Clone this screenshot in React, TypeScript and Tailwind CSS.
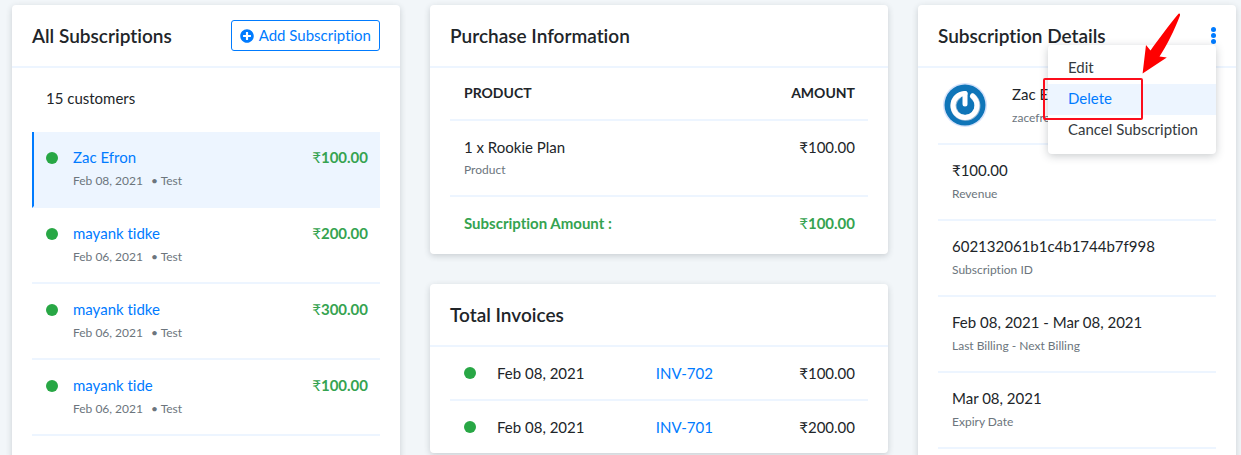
import type { ReactNode } from "react";

const FONT = "font-['Lato','Noto_Sans',sans-serif] [font-variant-ligatures:none]";

function Card({
  title,
  action,
  children,
  className = "",
}: {
  title: string;
  action?: ReactNode;
  children: ReactNode;
  className?: string;
}) {
  return (
    <section className={`rounded bg-white shadow-[0_2px_6px_rgba(40,50,60,0.2)] ${className}`}>
      <header className="flex h-[63px] items-center justify-between border-b-2 border-[#edf5ff] px-5">
        <h2 className="text-[19px] leading-7 font-semibold whitespace-nowrap text-[#212529]">{title}</h2>
        {action}
      </header>
      {children}
    </section>
  );
}

function Dot() {
  return <span className="block size-3 shrink-0 rounded-full bg-[#28a745]" />;
}

function PlusCircle() {
  return (
    <svg viewBox="0 0 512 512" className="size-3.5" fill="currentColor" aria-hidden="true">
      <path d="M256 8C119 8 8 119 8 256s111 248 248 248 248-111 248-248S393 8 256 8zm144 276c0 6.600-5.400 12-12 12h-92v92c0 6.600-5.400 12-12 12h-56c-6.600 0-12-5.400-12-12v-92h-92c-6.600 0-12-5.400-12-12v-56c0-6.600 5.400-12 12-12h92v-92c0-6.600 5.400-12 12-12h56c6.600 0 12 5.400 12 12v92h92c6.600 0 12 5.400 12 12v56z" />
    </svg>
  );
}

function Avatar() {
  return (
    <svg viewBox="0 0 44 44" className="size-11 shrink-0" aria-hidden="true">
      <circle cx="22" cy="22" r="22" fill="#d5e2fb" />
      <circle cx="22" cy="22" r="20.500" fill="#0f75b8" />
      <path
        d="M15.500 13A12 12 0 1 0 30 13.500"
        fill="none"
        stroke="#9dbdd6"
        strokeWidth="6"
        strokeLinecap="round"
      />
      <path
        d="M22 10.500C16 10.500 10 15.500 10 22.500A12 12 0 0 0 34 22.500C34 18.500 32.500 15.500 29.500 13"
        fill="none"
        stroke="#fff"
        strokeWidth="5"
        strokeLinecap="round"
        strokeLinejoin="round"
      />
      <path d="M22 10.500V21" fill="none" stroke="#fff" strokeWidth="5" strokeLinecap="round" />
    </svg>
  );
}

const subscriptions = [
  { name: "Zac Efron", date: "Feb 08, 2021", amount: "100.00", active: true },
  { name: "mayank tidke", date: "Feb 06, 2021", amount: "200.00", active: false },
  { name: "mayank tidke", date: "Feb 06, 2021", amount: "300.00", active: false },
  { name: "mayank tide", date: "Feb 06, 2021", amount: "100.00", active: false },
];

const invoices = [
  { date: "Feb 08, 2021", number: "INV-702", amount: "₹100.00" },
  { date: "Feb 08, 2021", number: "INV-701", amount: "₹200.00" },
];

const details = [
  { value: "₹100.00", label: "Revenue" },
  { value: "602132061b1c4b1744b7f998", label: "Subscription ID" },
  { value: "Feb 08, 2021 - Mar 08, 2021", label: "Last Billing - Next Billing" },
  { value: "Mar 08, 2021", label: "Expiry Date" },
];

function Subscriptions() {
  return (
    <Card
      title="All Subscriptions"
      className="min-h-screen"
      action={
        <button className="flex h-[31px] items-center gap-[5px] rounded-[3px] border border-[#007bff] px-2 text-[15px] text-[#007bff]">
          <PlusCircle />
          Add Subscription
        </button>
      }
    >
      <p className="px-[34px] pt-[19px] pb-[23px] text-[15px] leading-[22px]">15 customers</p>
      <ul className="px-5">
        {subscriptions.map((s, i) => (
          <li
            key={i}
            className={`flex gap-[15px] border-b-2 border-[#edf5ff] py-3.5 pr-3 ${
              s.active ? "border-l-2 border-l-[#007bff] bg-[#edf5ff] pl-3" : "pl-3.5"
            }`}
          >
            <span className="flex h-6 items-center">
              <Dot />
            </span>
            <div className="grow">
              <a href="#customer" className="block pb-0.5 text-[15px] leading-[22px] text-[#007bff]">
                {s.name}
              </a>
              <p className="flex text-xs leading-[22px] text-[#6c757d]">
                <span className="mr-2">{s.date}</span>
                <span>• Test</span>
              </p>
            </div>
            <span className="text-[15px] leading-[22px] font-bold text-[#35a350]">
              <span className="font-normal">₹</span>
              {s.amount}
            </span>
          </li>
        ))}
      </ul>
    </Card>
  );
}

function Purchase() {
  return (
    <Card title="Purchase Information">
      <div className="px-5 pb-[5px]">
        <table className="w-full text-[15px] leading-6">
          <thead>
            <tr className="border-b-2 border-[#edf5ff] text-sm leading-6">
              <th className="px-3.5 pt-[13px] pb-3.5 text-left font-bold">PRODUCT</th>
              <th className="px-[13px] pt-[13px] pb-3.5 text-right font-bold">AMOUNT</th>
            </tr>
          </thead>
          <tbody>
            <tr className="border-b-2 border-[#edf5ff] align-top">
              <td className="px-3.5 py-3.5">
                <p>1 x Rookie Plan</p>
                <p className="text-xs leading-[22px] text-[#6c757d]">Product</p>
              </td>
              <td className="px-[13px] py-3.5 text-right">₹100.00</td>
            </tr>
            <tr className="font-bold text-[#35a350]">
              <td className="px-3.5 py-3.5">Subscription Amount :</td>
              <td className="px-[13px] py-3.5 text-right">
                <span className="font-normal">₹</span>100.00
              </td>
            </tr>
          </tbody>
        </table>
      </div>
    </Card>
  );
}

function Invoices() {
  return (
    <Card title="Total Invoices">
      <div className="px-5">
        <table className="w-full table-fixed text-[15px] leading-6">
          <tbody>
            {invoices.map((inv) => (
              <tr key={inv.number} className="border-b-2 border-[#edf5ff] last:border-b-0">
                <td className="w-[47px] pl-3.5">
                  <Dot />
                </td>
                <td className="w-[38%] py-3.5">{inv.date}</td>
                <td className="py-3.5">
                  <a href="#invoice" className="text-[#007bff]">
                    {inv.number}
                  </a>
                </td>
                <td className="w-[25%] py-3.5 pr-[13px] text-right">{inv.amount}</td>
              </tr>
            ))}
          </tbody>
        </table>
      </div>
    </Card>
  );
}

function Menu() {
  return (
    <div className="relative">
      <button aria-label="More actions" className="flex w-1.5 flex-col items-center gap-px text-[#007bff]">
        <span className="size-[5px] rounded-full bg-current" />
        <span className="size-[5px] rounded-full bg-current" />
        <span className="size-[5px] rounded-full bg-current" />
      </button>
      <div className="absolute top-[18px] right-0 z-10 w-[168px] rounded bg-white py-2 text-[15px] leading-[29px] text-[#343a40] shadow-[0_2px_8px_rgba(40,50,60,0.25)]">
        <button className="block w-full px-5 pb-0.5 text-left">Edit</button>
        <button className="block w-full bg-[#edf5ff] px-5 pb-0.5 text-left text-[#007bff]">Delete</button>
        <button className="block w-full px-5 pb-0.5 text-left whitespace-nowrap">Cancel Subscription</button>
        <span className="pointer-events-none absolute top-[33px] -left-[5px] h-[42px] w-[100px] rounded-xs border-2 border-[#fc0d1b]" />
        <svg
          viewBox="0 0 40 62"
          className="pointer-events-none absolute -top-8 left-[94px] h-[62px] w-10"
          aria-hidden="true"
        >
          <path
            d="M.600 60.500 4 32 8.500 37.500C16 27 28 11 36.500 .800Q38.500 0 38 2.500C33 16 24 34 17.500 43.500L24.800 44.500Z"
            fill="#fe0000"
          />
        </svg>
      </div>
    </div>
  );
}

function Details() {
  return (
    <Card title="Subscription Details" className="min-h-screen" action={<Menu />}>
      <div className="px-5">
        <div className="flex gap-[25px] border-b-2 border-[#edf5ff] pt-[15px] pb-3.5 pl-[5px]">
          <Avatar />
          <div>
            <p className="pb-0.5 text-[15px] leading-[22px]">Zac Efron</p>
            <p className="text-xs leading-[22px] text-[#6c757d]">zacefron</p>
          </div>
        </div>
        <dl>
          {details.map((d) => (
            <div key={d.label} className="flex flex-col-reverse border-b-2 border-[#edf5ff] px-3.5 py-3.5">
              <dt className="text-xs leading-[22px] text-[#6c757d]">{d.label}</dt>
              <dd className="pb-0.5 text-[15px] leading-[22px]">{d.value}</dd>
            </div>
          ))}
        </dl>
      </div>
    </Card>
  );
}

export default function App() {
  return (
    <main
      className={`grid h-screen grid-cols-[388fr_458fr_318fr] gap-[30px] overflow-hidden bg-[#f2f6f9] pt-[5px] pr-[5px] pl-3 text-[#212529] ${FONT}`}
    >
      <Subscriptions />
      <div className="flex flex-col gap-[30px]">
        <Purchase />
        <Invoices />
      </div>
      <Details />
    </main>
  );
}
